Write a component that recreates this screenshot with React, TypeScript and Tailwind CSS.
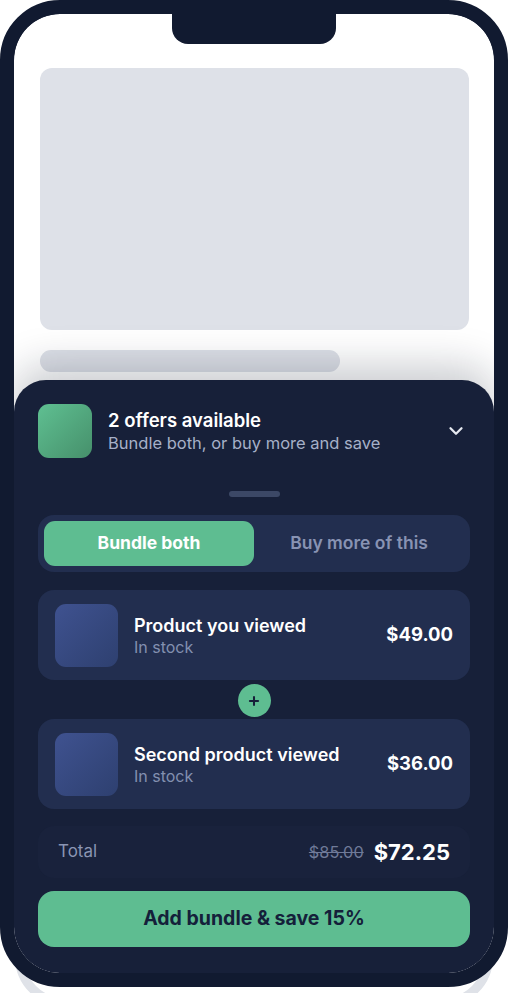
import { ChevronDown, Plus } from "lucide-react";

const PRODUCTS = [
  { name: "Product you viewed", stock: "In stock", price: "$49.00" },
  { name: "Second product viewed", stock: "In stock", price: "$36.00" },
];

function ProductCard({ name, stock, price }: { name: string; stock: string; price: string }) {
  return (
    <div className="flex items-center h-[90px] px-[17px] rounded-2xl bg-[#222e4f]">
      <div className="w-[63px] h-[63px] rounded-[11px] bg-gradient-to-br from-[#3f5290] to-[#2e4070] shrink-0" />
      <div className="ml-4 flex-1 min-w-0">
        <p className="text-[18px] leading-[23px] font-semibold text-white">{name}</p>
        <p className="text-[16px] leading-5 text-[#8390b0]">{stock}</p>
      </div>
      <span className="text-[18.5px] font-bold text-white">{price}</span>
    </div>
  );
}

export default function App() {
  return (
    <div className="relative h-[993px] overflow-hidden bg-white" style={{ fontFamily: "Inter, 'Noto Sans', sans-serif" }}>
      {/* Back plate peeking out under the phone */}
      <div className="absolute left-[15px] w-[478px] top-[606px] h-[401px] rounded-[50px] border-[9px] border-[#dfe2e8]" />

      <div className="relative w-[508px] h-[987px] border-[14px] border-[#111a30] rounded-[60px] bg-[#111a30] overflow-hidden">
        {/* Screen */}
        <div className="relative h-full rounded-[46px] bg-white overflow-hidden flex flex-col">
          {/* Notch */}
          <div className="absolute top-0 left-[158px] w-[164px] h-[30px] rounded-b-[16px] bg-[#111a30]" />

          {/* Page skeleton */}
          <div className="pt-[54px] px-[26px] pr-[25px]">
            <div className="h-[262px] rounded-xl bg-[#dee1e8]" />
            <div className="mt-5 w-[300px] h-[22px] rounded-full bg-[#dde0e7]" />
          </div>

          {/* Bottom sheet */}
          <div className="mt-auto h-[593px] rounded-t-[32px] bg-[#172039] px-6 pt-6 pb-[26px] flex flex-col shadow-[0_-14px_40px_rgba(15,23,42,0.22)]">
            {/* Header */}
            <div className="flex items-center">
              <div className="w-[54px] h-[54px] rounded-[11px] bg-gradient-to-br from-[#5fc092] to-[#46906b] shrink-0" />
              <div className="ml-4 flex-1">
                <p className="text-[18.5px] leading-6 font-semibold text-white">2 offers available</p>
                <p className="text-[16.5px] leading-[22px] text-[#a6b0c8]">Bundle both, or buy more and save</p>
              </div>
              <ChevronDown size={22} strokeWidth={2.5} className="text-[#e6e9f0] mr-[3px]" />
            </div>

            {/* Handle */}
            <div className="mt-[33px] mx-auto w-[51px] h-[6px] rounded-full bg-[#3c4866]" />

            {/* Tabs */}
            <div className="mt-[18px] grid grid-cols-2 p-[6px] rounded-2xl bg-[#222e4f]">
              <button className="h-[45px] rounded-[11px] bg-[#5ebd91] text-white text-[17.5px] font-bold">
                Bundle both
              </button>
              <button className="h-[45px] text-[#8893b3] text-[17.5px] font-semibold">
                Buy more of this
              </button>
            </div>

            {/* Products */}
            <div className="mt-[18px] flex flex-col">
              <ProductCard {...PRODUCTS[0]} />
              <div className="mx-auto mt-1 mb-[2px] w-[33px] h-[33px] rounded-full bg-[#5ebd91] flex items-center justify-center">
                <Plus size={14} strokeWidth={3.5} className="text-[#17203a]" />
              </div>
              <ProductCard {...PRODUCTS[1]} />
            </div>

            {/* Total */}
            <div className="mt-[17px] h-[52px] px-5 rounded-2xl bg-[#19223c] flex items-center">
              <span className="text-[17px] text-[#8a95b3]">Total</span>
              <span className="ml-auto text-[16.3px] text-[#6f7a98] line-through">$85.00</span>
              <span className="ml-[10px] text-[22px] font-bold text-white">$72.25</span>
            </div>

            {/* CTA */}
            <button className="mt-auto h-[56px] rounded-2xl bg-[#5ebd91] text-[19.5px] font-bold text-[#14203a]">
              Add bundle &amp; save 15%
            </button>
          </div>
        </div>
      </div>
    </div>
  );
}
